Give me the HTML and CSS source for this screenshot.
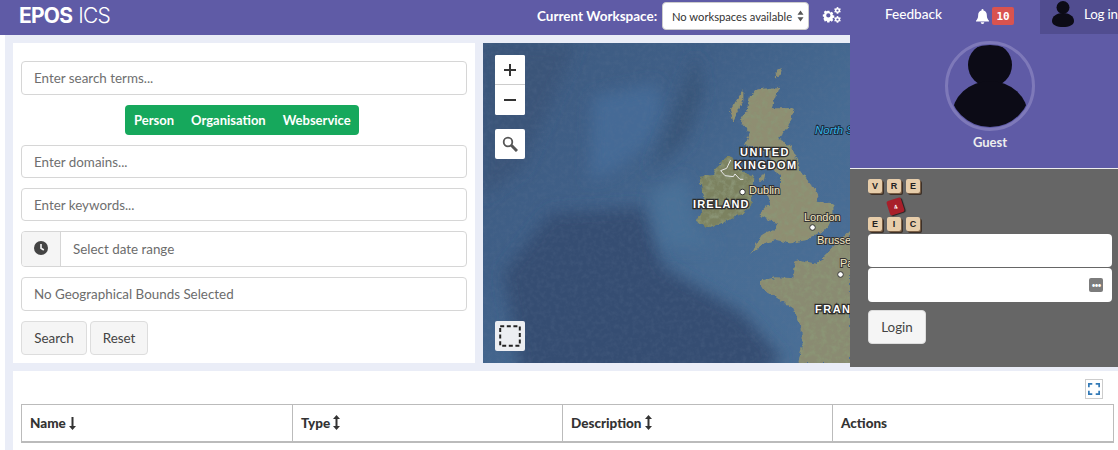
FILE: index.html
```html
<!DOCTYPE html>
<html lang="en">
<head>
<meta charset="utf-8">
<title>EPOS ICS</title>
<link rel="stylesheet" href="styles.css">
</head>
<body>
<header class="topbar">
  <div class="logo"><b>EPOS</b> <span>ICS</span></div>
  <div class="workspace">
    <label class="ws-label">Current Workspace:</label>
    <div class="ws-select"><span>No workspaces available</span>
      <svg class="ws-arrows" width="7" height="12" viewBox="0 0 7 12"><path d="M3.500 0.500L6.500 4.700H0.500ZM3.500 11.500L0.500 7.300H6.500Z" fill="#555"/></svg>
    </div>
    <svg class="cogs" width="19" height="16" viewBox="0 0 19 16" fill="#fff">
      <path transform="translate(.8 1.200) scale(.85)" fill-rule="evenodd" d="M5.200 3h2.600l.3 1.600 1 .5 1.400-.9 1.800 1.800-.9 1.400.5 1 1.600.3v2.600l-1.600.3-.5 1 .9 1.400-1.800 1.800-1.400-.9-1 .5-.3 1.500H5.200l-.3-1.500-1-.5-1.400.9L.7 12.500l.9-1.400-.5-1L0 9.700V7.300l1.600-.3.5-1-.9-1.400 1.800-1.800 1.400.9 1-.5zM6.500 6a2.500 2.500 0 1 0 0 5 2.500 2.500 0 0 0 0-5z"/>
      <path fill-rule="evenodd" d="M15.500 0l.8.2.2 1 .7.400 1-.3.600 1-.7.700v.9l.7.700-.6 1-1-.3-.7.400-.2 1h-1.600l-.2-1-.7-.4-1 .3-.6-1 .7-.7V3l-.7-.7.600-1 1 .3.7-.4.2-1zm0 2.400a1.100 1.100 0 1 0 0 2.200 1.100 1.100 0 0 0 0-2.200z"/>
      <path fill-rule="evenodd" d="M15.500 9l.8.2.2 1 .7.400 1-.3.600 1-.7.700v.9l.7.700-.6 1-1-.3-.7.400-.2 1h-1.600l-.2-1-.7-.4-1 .3-.6-1 .7-.7V12l-.7-.7.600-1 1 .3.7-.4.2-1zm0 2.400a1.100 1.100 0 1 0 0 2.200 1.100 1.100 0 0 0 0-2.200z"/>
    </svg>
  </div>
  <nav class="top-nav">
    <a class="feedback">Feedback</a>
    <div class="alerts">
      <svg width="13" height="15" viewBox="0 0 13 15" fill="#fff"><path d="M6.500 0a1 1 0 0 1 1 1v.6c2 .4 3.300 2.100 3.300 4.200 0 3.600 1 4.600 2.200 5.900v.8H0v-.8c1.200-1.300 2.200-2.300 2.200-5.900 0-2.100 1.300-3.800 3.300-4.200V1a1 1 0 0 1 1-1zM4.700 13.200h3.600a1.800 1.800 0 0 1-3.600 0z"/></svg>
      <span class="badge">10</span>
    </div>
    <div class="login-tab">
      <svg width="22" height="26" viewBox="0 0 22 26" fill="#0c0b16"><ellipse cx="11" cy="6.500" rx="6.500" ry="6.500"/><path d="M0 20c0-5 5-8 11-8s11 3 11 8c0 4-5 6-11 6S0 24 0 20z"/></svg>
      <span>Log in</span>
    </div>
  </nav>
</header>

<main class="page">
  <div class="top-row">
    <section class="card search-card">
      <input class="field field-lg" placeholder="Enter search terms...">
      <div class="tabs-row">
        <div class="pill"><span>Person</span><span>Organisation</span><span>Webservice</span></div>
      </div>
      <input class="field" placeholder="Enter domains...">
      <input class="field" placeholder="Enter keywords...">
      <div class="date-group">
        <span class="addon">
          <svg width="14" height="14" viewBox="0 0 14 14"><circle cx="7" cy="7" r="7" fill="#444"/><path d="M7 3v4.300l2.800 1.700" fill="none" stroke="#f5f5f5" stroke-width="1.600"/></svg>
        </span>
        <span class="date-text">Select date range</span>
      </div>
      <div class="field field-geo">No Geographical Bounds Selected</div>
      <div class="btn-row">
        <button class="btn btn-search">Search</button>
        <button class="btn btn-reset">Reset</button>
      </div>
    </section>

    <section class="map">
      <svg class="map-art" width="635" height="320" viewBox="0 0 635 320" xmlns="http://www.w3.org/2000/svg">
        <defs>
          <linearGradient id="sea" x1="0" y1="0" x2="1" y2="0.5">
            <stop offset="0" stop-color="#3d5a80"/>
            <stop offset="0.3" stop-color="#3f5f87"/>
            <stop offset="0.55" stop-color="#476c94"/>
            <stop offset="1" stop-color="#4b7097"/>
          </linearGradient>
          <filter id="blur" x="-30%" y="-30%" width="160%" height="160%"><feGaussianBlur stdDeviation="22"/></filter>
          <filter id="grain" x="0" y="0" width="100%" height="100%">
            <feTurbulence type="fractalNoise" baseFrequency="0.22" numOctaves="3" seed="8"/>
            <feColorMatrix values="0 0 0 0 .12  0 0 0 0 .18  0 0 0 0 .3  0 0 0 1.100 -.42"/>
          </filter>
          <filter id="land" x="-5%" y="-5%" width="110%" height="110%">
            <feTurbulence type="fractalNoise" baseFrequency="0.06" numOctaves="4" seed="3" result="n"/>
            <feDisplacementMap in="SourceGraphic" in2="n" scale="16" xChannelSelector="R" yChannelSelector="G" result="d"/>
            <feColorMatrix in="n" values="0 0 0 0 .26  0 0 0 0 .30  0 0 0 0 .18  0 0 0 2.400 -.95" result="spots"/>
            <feComposite in="spots" in2="d" operator="in" result="tex"/>
            <feMerge result="m"><feMergeNode in="d"/><feMergeNode in="tex"/></feMerge>
            <feGaussianBlur in="m" stdDeviation="1"/>
          </filter>
        </defs>
        <rect width="635" height="320" fill="url(#sea)"/>
        <g transform="scale(.3333) translate(0,-9)">
          <path filter="url(#blur)" fill="#354d72" d="M200 520L480 500L540 680L780 820L900 960L760 1040H120L60 700Z"/>
          <path filter="url(#blur)" fill="#3a5579" d="M0 10H280L120 380L0 470Z"/>
          <path filter="url(#blur)" fill="#456b96" d="M330 170L520 130L545 210L500 310L400 390L320 420Z"/>
          <path filter="url(#blur)" fill="#4a7198" d="M500 460L610 410L640 560L700 620L540 620Z"/>
          <path filter="url(#blur)" fill="#395478" d="M640 40L540 300L500 400L610 300L660 160Z"/>
        </g>
        <rect width="635" height="320" filter="url(#grain)" opacity=".35"/>
        <g filter="url(#land)" transform="translate(207 37) scale(.3333)">
          <path fill="#8f8e72" d="M195 30L270 20L245 85L310 85L305 120L265 180L300 195L325 250L330 270L385 345L380 365L430 370L430 420L400 455L350 480L300 490L260 480L220 490L180 525L215 465L255 450L260 430L205 405L240 370L232 340L270 320L270 285L250 270L240 222L190 200L165 195L180 160L150 120L170 90L180 50Z"/>
          <path fill="#7b8260" d="M75 265L120 225L170 280L190 290L185 375L160 400L60 445L20 425L45 380L28 290L70 285Z"/>
          <path fill="#948f6c" d="M120 90L160 30L160 60L130 125Z"/>
          <path fill="#8f8e72" d="M215 285L226 280L222 302L210 302Z"/>
          <path fill="#8d8d73" d="M390 540L440 490L480 470L480 545Z"/>
          <path fill="#8d8d73" d="M256 -30L275 -35L270 -10L258 -8Z"/>
        </g>
        <g filter="url(#land)" transform="translate(277 197) scale(.3333)">
          <path fill="#8a8b72" d="M0 122L50 112L100 115L105 65L120 60L170 72L225 20L270 -30V372H115L125 320L125 265L100 205L50 175L0 140Z"/>
        </g>
        <path transform="translate(207 37) scale(.3333)" d="M122 240L110 265L92 272L105 287L130 290L135 282L150 298L160 298" fill="none" stroke="#e8e8e8" stroke-width="3"/>
        <g class="map-caps">
          <text x="257" y="113">UNITED</text>
          <text x="251" y="126">KINGDOM</text>
          <text class="cap-tight" x="210" y="165">IRELAND</text>
          <text x="332" y="270">FRANCE</text>
        </g>
        <g class="map-city">
          <text x="266" y="151">Dublin</text>
          <text x="321" y="178">London</text>
          <text x="334" y="201">Brussels</text>
          <text x="357" y="224">Paris</text>
        </g>
        <text class="map-sea" x="332" y="91">North Sea</text>
        <g fill="#fff" stroke="#333" stroke-width="1">
          <circle cx="259.500" cy="149" r="2.800"/>
          <circle cx="329.500" cy="184.500" r="2.800"/>
          <circle cx="357.500" cy="231.500" r="2.800"/>
        </g>
      </svg>
      <div class="map-ctl ctl-zoom">
        <button class="ctl-btn">
          <svg width="14" height="14" viewBox="0 0 14 14"><path d="M7 1v12M1 7h12" stroke="#333" stroke-width="2"/></svg>
        </button>
        <button class="ctl-btn">
          <svg width="14" height="14" viewBox="0 0 14 14"><path d="M1 7h12" stroke="#333" stroke-width="2"/></svg>
        </button>
      </div>
      <div class="map-ctl ctl-find">
        <button class="ctl-btn">
          <svg width="16" height="16" viewBox="0 0 16 16" fill="none" stroke="#555"><circle cx="6" cy="6" r="4.300" stroke-width="1.800"/><path d="M9.300 9.300L15 15" stroke-width="3"/></svg>
        </button>
      </div>
      <div class="map-ctl ctl-box">
        <button class="ctl-btn ctl-grey">
          <svg width="22" height="22" viewBox="0 0 22 22"><rect x="1.200" y="1.200" width="19.600" height="19.600" fill="none" stroke="#222" stroke-width="2" stroke-dasharray="4 2.600"/></svg>
        </button>
      </div>
    </section>
  </div>

  <section class="card results">
    <div class="results-tools">
      <button class="fs-btn">
        <svg width="14" height="14" viewBox="0 0 14 14" fill="none" stroke="#337ab7" stroke-width="2"><path d="M1 5V1h4M9 1h4v4M13 9v4H9M5 13H1V9"/></svg>
      </button>
    </div>
    <table class="grid">
      <thead>
        <tr>
          <th class="col-first">Name <svg class="sort" width="7" height="13" viewBox="0 0 7 13"><path d="M2.500 0h2v9h2.500L3.500 13 0 9h2.500z" fill="#333"/></svg></th>
          <th class="col-a">Type <svg class="sort" width="7" height="15" viewBox="0 0 7 15"><path d="M3.500 0L7 4H4.500v7H7l-3.500 4L0 11h2.500V4H0z" fill="#333"/></svg></th>
          <th class="col-a">Description <svg class="sort" width="7" height="15" viewBox="0 0 7 15"><path d="M3.500 0L7 4H4.500v7H7l-3.500 4L0 11h2.500V4H0z" fill="#333"/></svg></th>
          <th>Actions</th>
        </tr>
      </thead>
    </table>
  </section>
</main>

<aside class="user-panel">
  <div class="user-head">
    <div class="avatar">
      <svg width="84" height="84" viewBox="0 0 84 84" fill="#0c0b16"><circle cx="42" cy="21" r="22"/><ellipse cx="42" cy="72" rx="38" ry="35"/></svg>
    </div>
    <div class="guest">Guest</div>
  </div>
  <div class="user-body">
    <div class="vre-logo">
      <div class="tile-row"><span class="tile">V</span><span class="tile">R</span><span class="tile">E</span></div>
      <div class="tile-row tile-mid"><span class="tile tile-red">4</span></div>
      <div class="tile-row"><span class="tile">E</span><span class="tile">I</span><span class="tile">C</span></div>
    </div>
    <div class="login-input"></div>
    <div class="login-input pw">
      <span class="pw-key">•••</span>
    </div>
    <button class="btn btn-login">Login</button>
  </div>
</aside>
</body>
</html>
```

FILE: styles.css
```css
* { box-sizing: border-box; }
html, body { margin: 0; height: 450px; overflow: hidden; }
body {
  background: #fff;
  color: #333;
  font-family: "Lato", "Liberation Sans", sans-serif;
  font-size: 13.400px;
  position: relative;
}
.topbar {
  height: 35px;
  background: #5f5ba6;
  display: flex;
  align-items: center;
  color: #fff;
  padding-left: 19px;
}
.logo { font-family: "Inter", "Liberation Sans", sans-serif; font-size: 21px; letter-spacing: -0.8px; line-height: 30px; width: 517px; flex: none; margin-top: -4px; }
.logo b { font-weight: 700; }
.logo span { font-weight: 300; margin-left: 1px; }
.workspace { display: flex; align-items: center; flex: none; width: 304px; margin-top: -3px; }
.ws-label { font-weight: 700; font-size: 13.500px; width: 126px; flex: none; white-space: nowrap; padding-left: 1px; }
.ws-select {
  width: 147px; flex: none; height: 28px; background: #fff; border: 1px solid #ccc; border-radius: 4px;
  color: #333; font-size: 11.200px; display: flex; align-items: center; justify-content: space-between;
  padding: 0 4px 0 9px; white-space: nowrap;
}
.cogs { margin-left: 13px; flex: none; margin-top: -2px; }
.top-nav { display: flex; align-items: center; flex: 1; height: 35px; padding-left: 45px; }
.feedback { font-size: 13.600px; font-weight: 500; width: 91px; flex: none; margin-top: -8px; }
.alerts { display: flex; align-items: center; gap: 3px; width: 64px; flex: none; margin-top: -3px; }
.badge { background: #d9534f; color: #fff; font-family: "DejaVu Sans Mono", monospace; font-weight: 700; font-size: 11px; width: 22px; height: 18px; border-radius: 2px; display: flex; align-items: center; justify-content: center; }
.login-tab { flex: 1; height: 34px; align-self: flex-start; background: #514d90; display: flex; align-items: center; padding: 0 0 6px 12px; gap: 10px; font-size: 13.400px; letter-spacing: -0.2px; white-space: nowrap; overflow: hidden; }

.page { margin-left: 5px; height: 415px; background: #eaedf7; padding: 8px 0 0 8px; display: flex; flex-direction: column; gap: 8px; overflow: hidden; }
.top-row { display: grid; grid-template-columns: 462px 1fr; gap: 8px; height: 320px; flex: none; }
.card { background: #fff; }
.search-card { padding: 18px 8px 0; display: flex; flex-direction: column; }
.field {
  display: block; width: 100%; height: 33px; border: 1px solid #d6d6d6; border-radius: 4px; background: #fff;
  padding: 0 12px; font: inherit; color: #6c6c6c; margin-bottom: 10px; outline: none;
}
.field::placeholder { color: #6f6f6f; opacity: 1; }
.field-lg { height: 34px; }
.field-geo { height: 34px; line-height: 32px; margin-bottom: 10px; }
.tabs-row { display: flex; justify-content: center; margin-bottom: 10px; padding-right: 4px; }
.pill { background: #16a85c; border-radius: 4px; color: #fff; height: 30px; width: 234px; display: flex; align-items: center; gap: 17px; padding: 0 9px; font-weight: 700; font-size: 13px; white-space: nowrap; }
.date-group { display: flex; height: 36px; border: 1px solid #d6d6d6; border-radius: 4px; margin-bottom: 10px; overflow: hidden; }
.addon { width: 39px; background: #f5f5f5; border-right: 1px solid #d6d6d6; display: flex; align-items: center; justify-content: center; flex: none; padding-bottom: 2px; }
.date-text { padding-left: 12px; line-height: 34px; color: #6c6c6c; }
.btn-row { display: flex; gap: 3px; }
.btn { height: 34px; border: 1px solid #ddd; border-radius: 4px; background: #f5f5f5; color: #444; font: inherit; padding: 0; }
.btn-search { width: 66px; }
.btn-reset { width: 58px; }

.map { position: relative; overflow: hidden; background: #3f5f88; }
.map-art { display: block; }
.map-caps text { font: 700 11px "Liberation Sans", sans-serif; letter-spacing: 1.500px; fill: #fff; stroke: #2c2c2c; stroke-width: 2.500px; paint-order: stroke; }
.map-caps .cap-tight { letter-spacing: 1.100px; }
.map-city text { font: 400 11px "Liberation Sans", sans-serif; fill: #f6e7c3; stroke: #333; stroke-width: 2px; paint-order: stroke; }
.map-sea { font: italic 400 11.500px "Liberation Sans", sans-serif; fill: #35b4e6; stroke: #1d2c3e; stroke-width: 2px; paint-order: stroke; }
.map-ctl { position: absolute; left: 12px; width: 30px; background: #fff; border-radius: 2px; overflow: hidden; }
.ctl-zoom { top: 12px; }
.ctl-find { top: 86px; }
.ctl-box { top: 278px; }
.ctl-btn { display: flex; align-items: center; justify-content: center; width: 30px; height: 30px; border: 0; padding: 0; background: #fff; }
.ctl-zoom .ctl-btn:first-child { border-bottom: 1px solid #ccc; }
.ctl-grey { background: #eceef2; }

.results { flex: 1; padding: 8px 4px 0 8px; }
.results-tools { display: flex; justify-content: flex-end; height: 25px; padding-right: 11px; }
.fs-btn { width: 18px; height: 20px; border: 1px solid #ccc; background: #fff; padding: 0; display: flex; align-items: center; justify-content: center; }
.fs-btn svg { width: 12px; height: 12px; }
.grid { width: 1093px; border-collapse: collapse; table-layout: fixed; }
.grid th { height: 37px; border: 1px solid #bbb; border-bottom: 2px solid #bbb; text-align: left; padding: 0 8px; font-size: 13.500px; font-weight: 900; color: #333; }
.col-first { width: 271px; }
.col-a { width: 270px; }
.sort { vertical-align: -2px; }

.user-panel { position: absolute; left: 850px; top: 34px; width: 268px; height: 333px; display: flex; flex-direction: column; }
.user-head { height: 135px; flex: none; background: #5f5ba6; border-bottom: 1px solid #eee; display: flex; flex-direction: column; align-items: center; padding: 7px 0 0 12px; color: #fff; }
.avatar { width: 90px; height: 90px; flex: none; border-radius: 50%; border: 3px solid #7e79b9; overflow: hidden; }
.avatar svg { display: block; clip-path: circle(41px at 42px 42px); }
.guest { font-weight: 700; font-size: 13px; margin-top: 3px; color: #eee; }
.user-body { flex: 1; background: #666; padding: 10px 6px 0 18px; }
.vre-logo { height: 55px; display: flex; flex-direction: column; }
.tile-row { display: flex; gap: 5px; height: 16px; }
.tile-mid { padding-left: 20px; height: 22px; align-items: center; }
.tile {
  width: 14px; height: 14px; background: #e7cdaa; border-radius: 2px; box-shadow: 1px 1px 0 #7a5f45, 2px 2px 0 #3c3028;
  color: #222; font: 700 9px "Liberation Sans", sans-serif; display: flex; align-items: center; justify-content: center;
}
.tile-red { background: #a81f2a; color: #fff; font-size: 6px; transform: rotate(-18deg); width: 15px; height: 15px; box-shadow: 1px 1px 1px #222; }
.login-input { height: 33px; background: #fff; border-radius: 4px; margin-bottom: 1px; position: relative; }
.pw { height: 34px; display: flex; align-items: center; justify-content: flex-end; padding-right: 9px; }
.pw-key { width: 14px; height: 14px; background: #7c7c7c; border-radius: 2px; color: #fff; font-size: 7px; line-height: 14px; text-align: center; letter-spacing: -1px; }
.btn-login { display: block; width: 58px; height: 34px; margin-top: 8px; }
```
